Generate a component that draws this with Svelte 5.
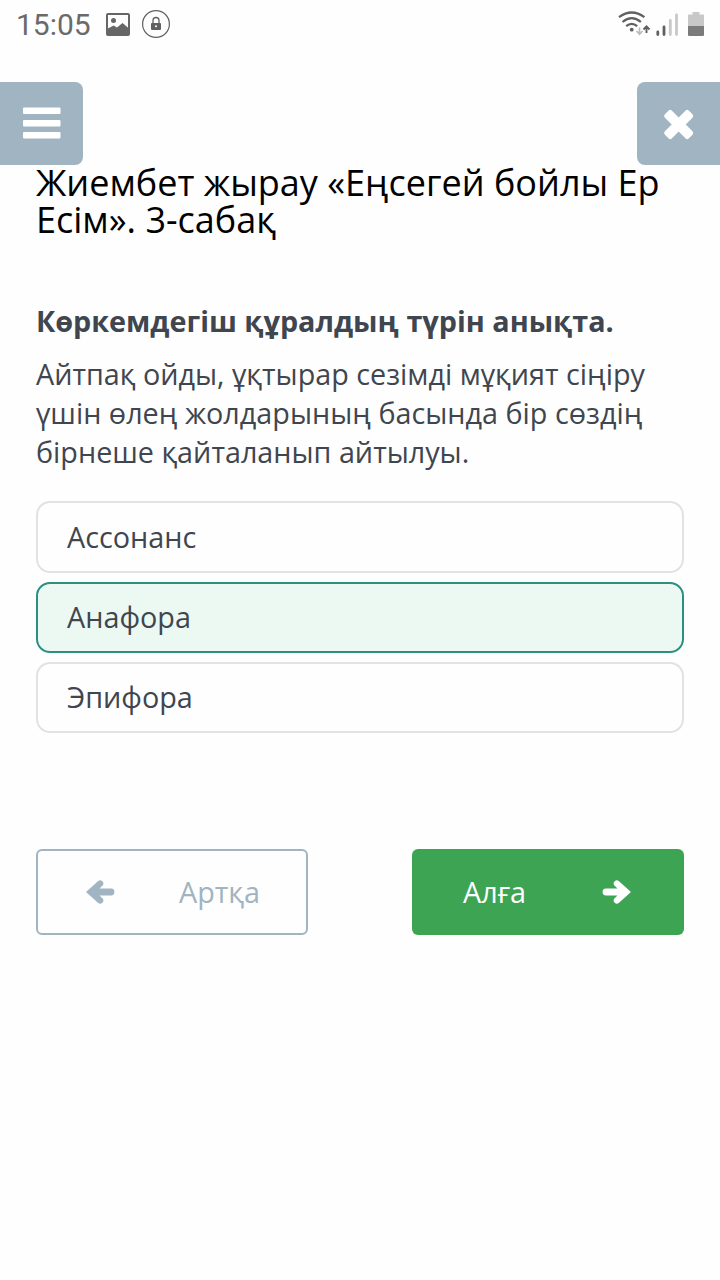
<script lang="ts">
const title = 'Жиембет жырау «Еңсегей бойлы Ер Есім». 3-сабақ';
const question = {
    heading: 'Көркемдегіш құралдың түрін анықта.',
    text: 'Айтпақ ойды, ұқтырар сезімді мұқият сіңіру үшін өлең жолдарының басында бір сөздің бірнеше қайталанып айтылуы.',
}
const answers = ['Ассонанс', 'Анафора', 'Эпифора'];

let selected: string = 'Анафора';
</script>

<div class="screen">
    <div class="status">
        <div class="status-left">
            <span class="time">15:05</span>
            <svg class="picture" width="24" height="23" viewBox="0 0 24 23">
                <rect x="1" y="1" width="22" height="21" rx="1" fill="none" stroke="#666" stroke-width="2" />
                <circle cx="7.500" cy="7.500" r="2.500" fill="#666" />
                <path d="M1 16l6.500-3.500 3.500 2 5.500-4.500 6.500 5.500V22H1z" fill="#666" />
            </svg>
            <svg width="28" height="28" viewBox="0 0 28 28">
                <circle cx="14" cy="14" r="13.400" fill="none" stroke="#606060" stroke-width="1.200" />
                <path d="M11 13v-2.500a3 3 0 0 1 6 0V13" fill="none" stroke="#606060" stroke-width="1.300" />
                <rect x="9" y="13" width="10" height="7" rx="1" fill="#606060" />
                <circle cx="14" cy="16.300" r="1" fill="#fff" />
            </svg>
        </div>
        <svg width="88" height="27" viewBox="0 0 88 27">
            <g fill="none" stroke="#606060" stroke-width="2.200">
                <path d="M1 7.200q12.700-9.400 25.400 0" />
                <path d="M4.500 12q9.200-7.800 18.400 0" />
                <path d="M8.200 16.200q5.500-4.800 11 0" />
            </g>
            <circle cx="13.700" cy="19.700" r="1.900" fill="#606060" />
            <path d="M21.500 17.500v6.500m-3-3l3 3.200 3-3.200" fill="none" stroke="#bdbdbd" stroke-width="1.700" />
            <path d="M28.500 23v-6.500m-3 3l3-3.200 3 3.200" fill="none" stroke="#606060" stroke-width="1.900" />
            <g stroke-width="2.800" stroke-linecap="round">
                <path d="M39.800 22v2.500M46 17v7.500" stroke="#606060" />
                <path d="M52.300 10.500v14M58.500 5v19.500" stroke="#c8c8c8" />
            </g>
            <path d="M74.500 2h7v2.500h4.500v11.500H70v-11.500h4.500z" fill="#c8c8c8" />
            <path d="M70 16h16V25a1 1 0 0 1-1 1H71a1 1 0 0 1-1-1z" fill="#7b7b7b" />
        </svg>
    </div>

    <header>
        <button class="square menu" aria-label="menu">
            <svg width="38" height="32" viewBox="0 0 38 32" fill="#fff">
                <rect y="-0.500" width="37.500" height="6.500" rx="1" />
                <rect y="12" width="37.500" height="6.500" rx="1" />
                <rect y="24" width="37.500" height="6.500" rx="1" />
            </svg>
        </button>
        <button class="square close" aria-label="close">
            <svg width="30" height="30" viewBox="0 0 30 30">
                <g transform="translate(-0.300 0.500) rotate(45 15 15)" fill="#fff">
                    <rect x="-2" y="10" width="34" height="10" rx="2.500" />
                    <rect x="10" y="-2" width="10" height="34" rx="2.500" />
                </g>
            </svg>
        </button>
    </header>

    <main>
        <h1>{title}</h1>
        <h2>{question.heading}</h2>
        <p>{question.text}</p>
        <div class="answers">
            {#each answers as answer}
                <button class="answer {answer === selected ? 'active' : ''}" on:click={() => selected = answer}>{answer}</button>
            {/each}
        </div>
        <div class="controls">
            <button class="control back">
                <svg width="30" height="26" viewBox="0 0 30 26">
                    <path d="M1 13L13 2.200a3.200 3.200 0 0 1 4.600 4.400L14.500 9.600H26a3.400 3.400 0 0 1 0 6.800H14.500l3.100 3a3.200 3.200 0 0 1-4.600 4.400z" fill="currentColor" />
                </svg>
                <span>Артқа</span>
            </button>
            <button class="control next">
                <span>Алға</span>
                <svg width="30" height="26" viewBox="0 0 30 26">
                    <path d="M29 13L17 2.200a3.200 3.200 0 0 0-4.600 4.400L15.500 9.600H4a3.400 3.400 0 0 0 0 6.800H15.500l-3.100 3a3.200 3.200 0 0 0 4.600 4.400z" fill="currentColor" />
                </svg>
            </button>
        </div>
    </main>
</div>

<style>
:global(body) {
    background: #fefefe;
}
.screen {
    height: 1280px;
    overflow: hidden;
    font-family: "Open Sans", "Noto Sans", sans-serif;
    color: #40464f;
}
button {
    font-family: inherit;
    border: none;
    outline: none;
    padding: 0;
}
h1, h2, p {
    margin: 0;
}
svg {
    display: block;
    flex: none;
    overflow: visible;
}
.status {
    height: 82px;
    box-sizing: border-box;
    padding: 10px 14px 0 16px;
    display: flex;
    justify-content: space-between;
    align-items: flex-start;
}
.status-left {
    display: flex;
    align-items: center;
    height: 28px;
}
.time {
    width: 90px;
    padding-top: 2px;
    font-family: Roboto, sans-serif;
    font-size: 30px;
    line-height: 28px;
    color: #6a6a6a;
}
.picture {
    margin-right: 12px;
}
header {
    height: 83px;
    display: flex;
    justify-content: space-between;
}
.square {
    width: 83px;
    height: 83px;
    display: grid;
    place-content: center;
    background: #a0b4c1;
}
.menu {
    border-radius: 0 8px 8px 0;
}
.close {
    border-radius: 8px 0 0 8px;
}
main {
    padding: 0 36px;
}
h1 {
    margin-top: -1px;
    font-size: 36px;
    line-height: 37px;
    font-weight: 400;
    color: #000;
}
h2 {
    margin-top: 63px;
    font-size: 28.75px;
    line-height: 39px;
    font-weight: 700;
}
p {
    margin-top: 14px;
    font-size: 28.75px;
    line-height: 39px;
}
.answers {
    margin-top: 30.400px;
    display: flex;
    flex-direction: column;
    gap: 8.900px;
}
.answer {
    height: 71.450px;
    padding: 0 29px;
    border: 2px solid #e2e2e2;
    border-radius: 14px;
    background: #fefefe;
    color: inherit;
    font-size: 28.8px;
    line-height: 38.600px;
    text-align: start;
}
.active {
    border-color: #2b8f82;
    background: #ecf9f2;
}
.controls {
    margin-top: 115.600px;
    display: flex;
    justify-content: space-between;
}
.control {
    width: 272px;
    height: 86px;
    box-sizing: border-box;
    border-radius: 6px;
    display: flex;
    justify-content: space-between;
    align-items: center;
    font-size: 28.8px;
    line-height: 38px;
}
.control span {
    margin-bottom: 1px;
}
.back {
    padding: 0 46px 0 47px;
    border: 2px solid #a0b4c1;
    background: transparent;
    color: #a0b4c1;
}
.next {
    padding: 0 52px 0 51px;
    background: #3da453;
    color: #fff;
}
</style>
